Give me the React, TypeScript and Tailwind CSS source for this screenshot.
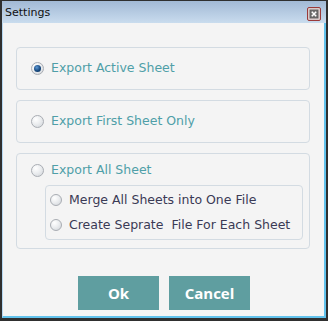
import React from "react";

const font = { fontFamily: '"DejaVu Sans", Verdana, sans-serif' };

function Radio({ checked = false, size = 13 }: { checked?: boolean; size?: number }) {
  return (
    <span
      className="relative inline-flex shrink-0 items-center justify-center rounded-full border border-[#a9adb3]"
      style={{
        width: size,
        height: size,
        background: "radial-gradient(circle at 35% 30%, #ffffff 0%, #eceef0 45%, #cfd3d8 100%)",
      }}
    >
      {checked && (
        <span
          className="block rounded-full"
          style={{
            width: 7,
            height: 7,
            background: "radial-gradient(circle at 40% 35%, #5f9ad6 0%, #17497f 55%, #0a2a50 100%)",
          }}
        />
      )}
    </span>
  );
}

export default function App() {
  return (
    <div className="w-[328px] h-[321px] bg-[#2f2f2f] pt-px px-[2px] pb-[3px] flex" style={font}>
      <div className="flex-1 flex flex-col">
        <div className="h-[22px] flex items-center justify-between pl-[3px] pr-[5px] bg-gradient-to-b from-[#a2b9d5] to-[#c9dcee]">
          <span className="text-[11px] text-[#111] leading-none">Settings</span>
          <svg width="14" height="14" viewBox="0 0 14 14" className="mt-[3px]">
            <rect x="0.5" y="0.5" width="13" height="13" rx="1.5" fill="#d9c9c9" stroke="#9a3a3a" />
            <rect x="3" y="3" width="8" height="8" fill="#707070" stroke="#5a5a5a" strokeWidth="0.8" />
            <path d="M4.8 4.8 L9.2 9.2 M9.2 4.8 L4.8 9.2" stroke="#fff" strokeWidth="1.5" />
          </svg>
        </div>
        <div className="flex-1 flex flex-col bg-[#f4f4f4] border-l border-l-[#b6d8f2] border-r-2 border-b-2 border-r-[#62c2ec] border-b-[#62c2ec] pl-[13px] pt-[24px]">
          <div className="w-[294px] h-[43px] rounded-[4px] border border-[#d3dbe2] flex items-center pl-[14px]">
            <Radio checked />
            <span className="ml-[7px] text-[12.5px] text-[#4f9fa8]">Export Active Sheet</span>
          </div>
          <div className="mt-[10px] w-[294px] h-[43px] rounded-[4px] border border-[#d3dbe2] flex items-center pl-[14px]">
            <Radio />
            <span className="ml-[7px] text-[12.5px] text-[#4f9fa8]">Export First Sheet Only</span>
          </div>
          <div className="mt-[10px] w-[294px] h-[96px] rounded-[4px] border border-[#d3dbe2] flex flex-col pl-[14px] pt-[9px]">
            <div className="flex items-center h-[14px]">
              <Radio />
              <span className="ml-[7px] text-[12.5px] text-[#4f9fa8]">Export All Sheet</span>
            </div>
            <div className="mt-[8px] ml-[14px] w-[258px] h-[55px] rounded-[4px] border border-[#d3dbe2] flex flex-col pl-[4px] pt-[8px] gap-[13px]">
              <div className="flex items-center h-[12px]">
                <Radio size={12} />
                <span className="ml-[7px] text-[12.5px] text-[#3a3a55]">Merge All Sheets into One File</span>
              </div>
              <div className="flex items-center h-[12px]">
                <Radio size={12} />
                <span className="ml-[7px] text-[12.5px] text-[#3a3a55] whitespace-pre">Create Seprate  File For Each Sheet</span>
              </div>
            </div>
          </div>
          <div className="mt-[27px] flex gap-[10px] pl-[62px]">
            <button
              className="w-[81px] h-[34px] bg-[#5f9ea0] text-white font-bold text-[15px]"
              style={{ fontFamily: '"Open Sans", sans-serif' }}
            >
              Ok
            </button>
            <button
              className="w-[81px] h-[34px] bg-[#5f9ea0] text-white font-bold text-[15px]"
              style={{ fontFamily: '"Open Sans", sans-serif' }}
            >
              Cancel
            </button>
          </div>
        </div>
      </div>
    </div>
  );
}
